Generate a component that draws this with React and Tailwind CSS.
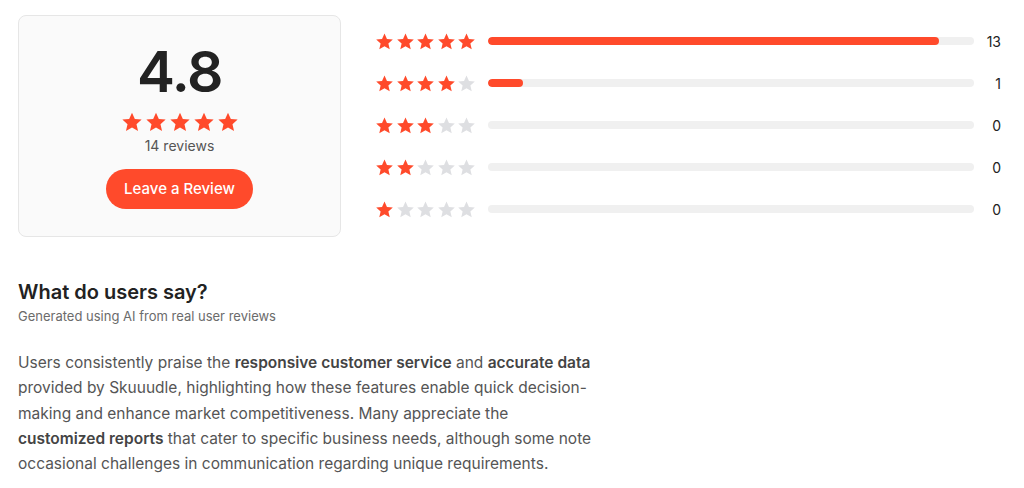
import React from 'react';

const ORANGE = '#ff4a2b';

const Star = ({ filled, size }) => (
  <svg width={size} height={size} viewBox="0 0 24 24" className="shrink-0">
    <path
      d="M12 1.8l3.1 6.9 7.4.7-5.6 5 1.7 7.4L12 17.9l-6.6 3.9 1.7-7.4-5.6-5 7.4-.7z"
      fill={filled ? ORANGE : '#dedfe2'}
    />
  </svg>
);

const StarRow = ({ count, size, gap }) => (
  <div className={`flex items-center ${gap}`}>
    {[0, 1, 2, 3, 4].map(i => (
      <Star key={i} filled={i < count} size={size} />
    ))}
  </div>
);

const breakdown = [
  { stars: 5, total: 13 },
  { stars: 4, total: 1 },
  { stars: 3, total: 0 },
  { stars: 2, total: 0 },
  { stars: 1, total: 0 },
];

const App = () => {
  const reviews = 14;

  return (
    <div
      className="w-[1024px] h-[488px] bg-white pl-[18px] pr-[23px] pt-[15px] text-[#222]"
      style={{ fontFamily: 'Inter, "Noto Sans", sans-serif' }}
    >
      <div className="flex items-start">
        {/* Summary card */}
        <div className="w-[323px] h-[222px] shrink-0 rounded-lg border border-[#e6e6e6] bg-[#fafafa] flex flex-col items-center pt-[24px]">
          <div className="text-[57px] leading-[64px] font-semibold tracking-tight text-[#222]">4.8</div>
          <div className="mt-[7px]">
            <StarRow count={5} size={22} gap="gap-[2px]" />
          </div>
          <div className="mt-[3px] text-[14px] leading-5 text-[#555]">{reviews} reviews</div>
          <button className="mt-[13px] h-[40px] px-[18px] rounded-full text-white text-[15px] font-medium" style={{ backgroundColor: ORANGE }}>
            Leave a Review
          </button>
        </div>

        {/* Rating distribution */}
        <div className="flex-1 ml-[34px] pt-[16px] flex flex-col gap-[22px]">
          {breakdown.map(row => (
            <div key={row.stars} className="flex items-center h-[20px]">
              <StarRow count={row.stars} size={19} gap="gap-[1.5px]" />
              <div className="ml-[12px] flex-1 h-[8px] rounded-full bg-[#f0f0f0] overflow-hidden">
                <div className="h-full rounded-full" style={{ width: `${(row.total / reviews) * 100}%`, backgroundColor: ORANGE }} />
              </div>
              <div className="w-[27px] text-right text-[14px] text-[#222]">{row.total}</div>
            </div>
          ))}
        </div>
      </div>

      {/* AI summary */}
      <div className="mt-[41px]">
        <h3 className="text-[20px] leading-7 font-semibold text-[#222]">What do users say?</h3>
        <p className="text-[13px] leading-5 text-[#6b6b6b]">Generated using AI from real user reviews</p>
        <p className="mt-[24px] w-[578px] text-[15.5px] leading-[25.3px] text-[#555]">
          Users consistently praise the <span className="font-semibold text-[#444]">responsive customer service</span> and{' '}
          <span className="font-semibold text-[#444]">accurate data</span> provided by Skuuudle, highlighting how these features enable quick decision-making and enhance market competitiveness. Many appreciate the{' '}
          <span className="font-semibold text-[#444]">customized reports</span> that cater to specific business needs, although some note occasional challenges in communication regarding unique requirements.
        </p>
      </div>
    </div>
  );
};

export default App;
